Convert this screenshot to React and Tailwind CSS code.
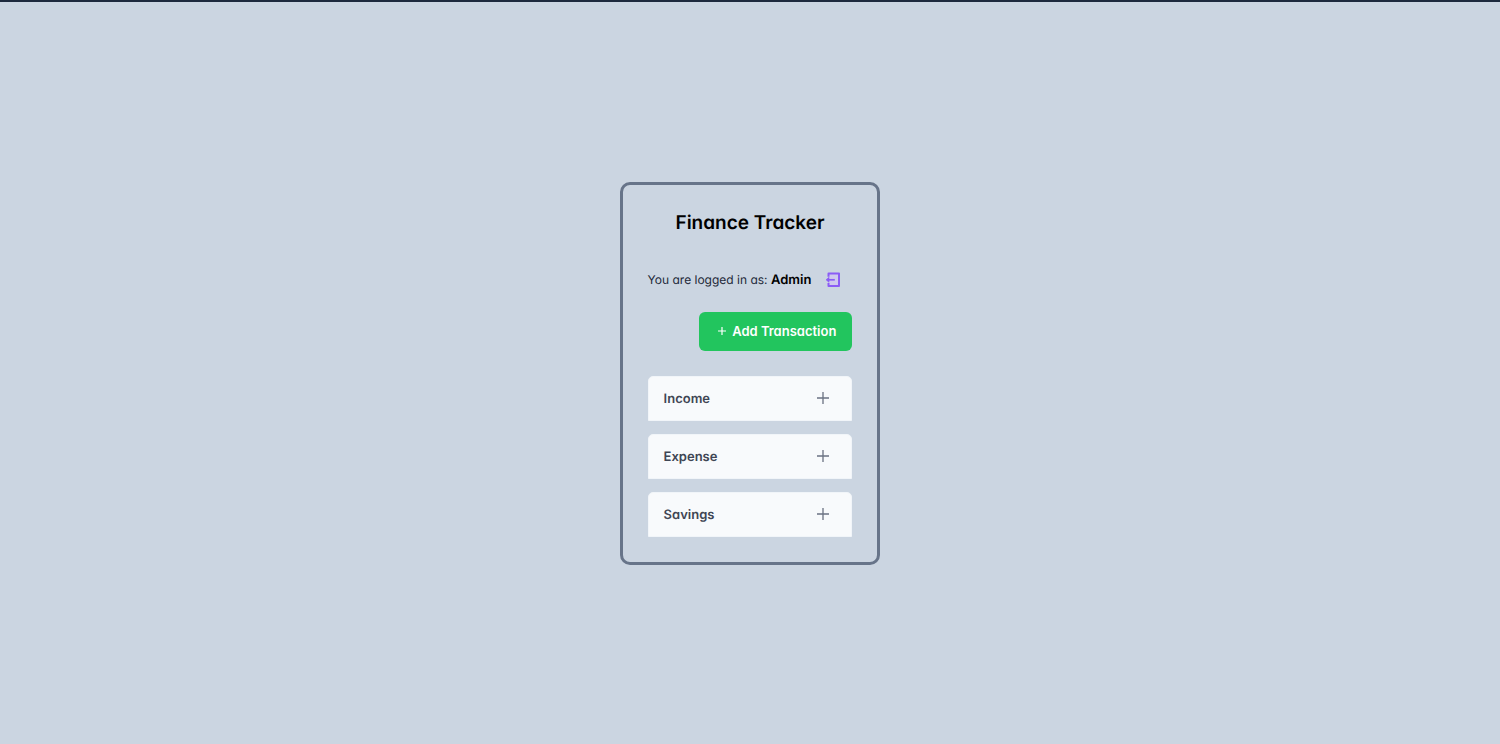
import React from "react";

const categories = ["Income", "Expense", "Savings"];

function PlusIcon() {
  return (
    <svg width="12" height="12" viewBox="0 0 12 12" fill="none" stroke="currentColor" strokeWidth="1.3" aria-hidden="true">
      <path d="M6 0v12M0 6h12" />
    </svg>
  );
}

function LogoutIcon() {
  return (
    <svg width="16" height="16" viewBox="0 0 16 16" fill="none" aria-hidden="true">
      <path d="M4 2h10v12H4z" fill="#cfc9ee" />
      <path d="M3.5 4.8V1.5H14v12.5H3.5v-3" stroke="#8b5cf6" strokeWidth="2" strokeLinejoin="round" />
      <path d="M9.8 7.8H2" stroke="#8b5cf6" strokeWidth="1.7" />
      <path d="M4 5.3 1 7.8l3 2.5z" fill="#8b5cf6" stroke="#8b5cf6" strokeWidth="0.6" />
    </svg>
  );
}

function CategoryPanel({ title }) {
  return (
    <section className="flex h-[45px] items-center justify-between rounded-t-[5px] border border-[#f1f5f9] bg-slate-50 pr-[22px] pl-[15px]">
      <h2 className="pt-px text-[13px] leading-6 font-semibold text-[#3f4654]">{title}</h2>
      <button type="button" aria-label={`Expand ${title}`} className="text-gray-500">
        <PlusIcon />
      </button>
    </section>
  );
}

export default function App() {
  return (
    <div className="flex min-h-screen flex-col border-t-2 border-slate-800 bg-[#cbd5e1] font-['Inter',sans-serif] text-[12px] [font-feature-settings:'cv02','cv03','cv04','cv11'] [text-rendering:geometricPrecision]">
      <main className="flex flex-1 items-center justify-center">
        <div className="flex flex-col rounded-[10px] border-3 border-[#677489] p-[25px]">
          <h1 className="text-center text-[19px] leading-[26px] font-semibold text-black">Finance Tracker</h1>
          <div className="mt-[30px] flex items-center gap-[14px] pr-[11px] leading-7">
            <p className="text-gray-800">
              You are logged in as: <strong className="text-[13px] font-semibold text-black">Admin</strong>
            </p>
            <button type="button" aria-label="Log out">
              <LogoutIcon />
            </button>
          </div>
          <button
            type="button"
            className="mt-[18px] flex h-[39px] items-center gap-[6px] self-end rounded-md bg-[#22c55e] pr-4 pl-[19px] text-[13px] leading-6 font-semibold text-white"
          >
            <svg width="8" height="8" viewBox="0 0 8 8" stroke="currentColor" strokeWidth="1.2" aria-hidden="true">
              <path d="M4 0v8M0 4h8" />
            </svg>
            Add Transaction
          </button>
          <div className="mt-[25px] flex flex-col gap-[13px]">
            {categories.map((title) => (
              <CategoryPanel key={title} title={title} />
            ))}
          </div>
        </div>
      </main>
    </div>
  );
}
